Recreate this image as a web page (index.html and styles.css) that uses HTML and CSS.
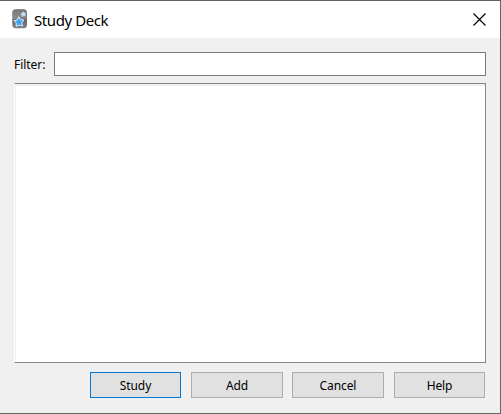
FILE: index.html
```html
<!DOCTYPE html>
<html lang="en">
<head>
<meta charset="utf-8">
<title>Study Deck</title>
<link rel="stylesheet" href="styles.css">
</head>
<body>
<div class="window">
  <header class="titlebar">
    <svg class="app-icon" width="16" height="20" viewBox="0 0 16 20">
      <defs><linearGradient id="g" x1="0" y1="0" x2="0" y2="1"><stop offset="0" stop-color="#626262"/><stop offset=".48" stop-color="#858585"/><stop offset=".55" stop-color="#666"/><stop offset="1" stop-color="#808080"/></linearGradient></defs>
      <rect x=".3" y=".3" width="14.700" height="19" rx="3.500" fill="url(#g)"/>
      <path d="M.5 10Q7 10 14.800 6V3.500Q14.500.5 12 .5H3.500Q.5.5.5 3.500Z" fill="#999" opacity=".4"/>
      <path d="M6.800 7.800l1.700 2.900 3.300.3-2 2.700.7 3.300-3.300-1-3.100 1.500.2-3.400-2.300-2.400 3.300-.7z" fill="#38a5ec" stroke="#d9f0ff" stroke-width="1"/>
      <path d="M11 2.900l.8 1.300 1.600-.1-.8 1.400.6 1.400-1.600-.3-1.300 1-.1-1.600-1.300-.9 1.500-.6z" fill="#b5def7" stroke="#d5ecfa" stroke-width=".8"/>
    </svg>
    <h1 class="title">Study Deck</h1>
    <button class="close" aria-label="Close"><svg width="13" height="13" viewBox="0 0 13 13"><path d="M.5.5l12 12M12.500.5l-12 12" stroke="#000" stroke-width="1.150" fill="none"/></svg></button>
  </header>
  <main class="content">
    <div class="filter"><label class="label" for="filter">Filter:</label><input class="field" id="filter" type="text"></div>
    <div class="list"></div>
    <div class="actions">
      <button class="button primary">Study</button>
      <button class="button wide">Add</button>
      <button class="button cancel wide">Cancel</button>
      <button class="button">Help</button>
    </div>
  </main>
</div>
</body>
</html>
```
FILE: styles.css
```css
* { box-sizing: border-box; }
body { margin: 0; overflow: hidden; font-family: "Noto Sans", sans-serif; color: #000; }
.window {
  width: 501px; height: 414px;
  display: flex; flex-direction: column;
  background: #f0f0f0;
  border: solid #666; border-width: 1px 1px 1px 0;
  border-top-color: #616161;
}
.titlebar { height: 37px; flex: none; display: flex; align-items: center; background: #fff; padding: 0 14px 1px 12px; }
.app-icon { flex: none; }
.title { margin: 0 0 0 6px; padding-top: 2px; font: 400 15px/20px "Noto Sans", sans-serif; letter-spacing: -.42px; }
.close { margin-left: auto; padding: 0; border: 0; background: none; display: flex; }
.content { display: flex; flex-direction: column; padding: 14px 14px 0; }
.filter { display: flex; align-items: center; height: 24px; }
.label { width: 40px; padding-top: 2px; font-size: 12px; line-height: 24px; letter-spacing: -.05px; white-space: nowrap; }
.field { flex: 1; min-width: 0; height: 24px; margin: 0; border: 1px solid #7a7a7a; background: #fff; outline: 0; }
.list {
  height: 280px; margin-top: 7px; background: #fff;
  border: 1px solid #828790; border-left-color: #fff;
  box-shadow: inset 1px 2px #f0f0f0;
}
.actions { display: flex; gap: 10px; justify-content: flex-end; margin: 9px 1px 0 0; }
.button {
  width: 91px; height: 26px; padding: 2px 0 0;
  border: 1px solid #adadad; background: #e1e1e1; color: #000;
  font: 12px/22px "Noto Sans", sans-serif; letter-spacing: -.1px;
}
.wide { width: 92px; }
.cancel { margin-left: -1px; }
.primary { border-color: #0078d7; }
```
